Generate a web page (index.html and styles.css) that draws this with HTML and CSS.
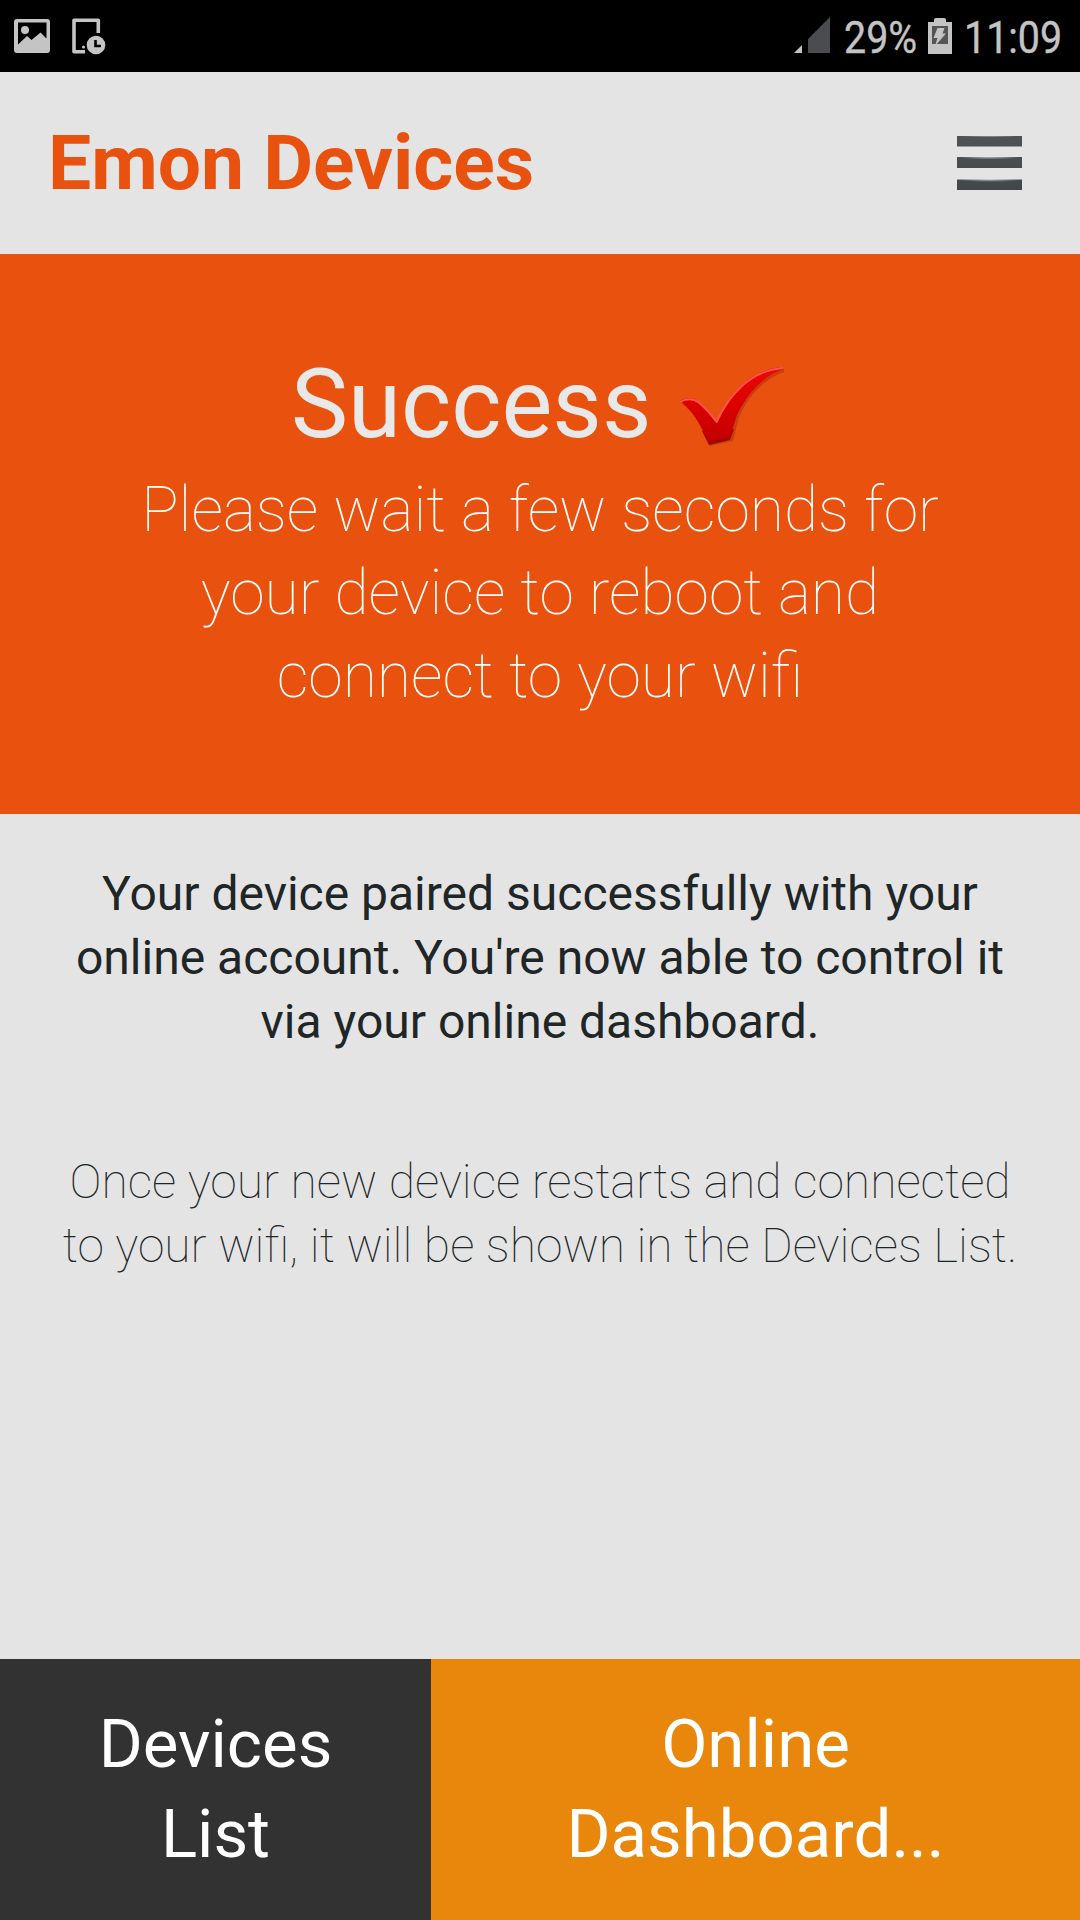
FILE: index.html
```
<!DOCTYPE html>
<html lang="en">
<head>
<meta charset="utf-8">
<title>Emon Devices</title>
<link rel="stylesheet" href="styles.css">
</head>
<body>
<div class="status-bar">
  <svg class="status-left" width="96" height="40" viewBox="12 16 96 40">
    <path fill="#c4c4c4" fill-rule="evenodd" d="M17 19h30q3 0 3 3v28q0 3-3 3H17q-3 0-3-3V22q0-3 3-3zm1 3.500v22l9-8.500 4.500 4 9-7.500 6 6V22.500z"/>
    <circle cx="25" cy="30" r="4" fill="#c4c4c4"/>
    <path fill="none" stroke="#c4c4c4" stroke-width="3.600" stroke-linejoin="round" d="M98.300 33V20.300H74V51.800H85"/>
    <circle cx="83.500" cy="47" r="1.500" fill="#c4c4c4"/>
    <circle cx="96" cy="45" r="9.300" fill="#c4c4c4"/>
    <path fill="none" stroke="#000" stroke-width="2.600" d="M95.500 40v6h5.500"/>
  </svg>
  <div class="status-right">
    <svg width="36" height="38" viewBox="794 16 36 38">
      <path fill="#c4c4c4" d="M794 53l8-8v8z"/>
      <path fill="#4b4c4f" d="M808 53V39l22-22v36z"/>
    </svg>
    <span class="percent"><span class="narrow">29%</span></span>
    <svg width="24" height="38" viewBox="928 16 24 38">
      <path fill="#c4c4c4" d="M928 22h6v-2q0-2 2-2h8q2 0 2 2v2h6v32h-24z"/>
      <path fill="#555" d="M932 26h16v18h-16z"/>
      <path fill="#c4c4c4" d="M937.500 28h7l-2 5.500h3.500L935 46l2.500-8h-4z"/>
    </svg>
    <span class="clock"><span class="narrow">11:09</span></span>
  </div>
</div>
<header class="header">
  <h1 class="title">Emon Devices</h1>
  <svg class="menu" width="65" height="54" viewBox="0 0 65 54">
    <defs>
      <linearGradient id="bar" x1="0" y1="0" x2="0" y2="1">
        <stop offset="0" stop-color="#505355"/><stop offset="1" stop-color="#444749"/>
      </linearGradient>
      <radialGradient id="shine" cx=".5" cy="0" r=".5">
        <stop offset="0" stop-color="#e4e4e4" stop-opacity=".8"/><stop offset="1" stop-color="#e4e4e4" stop-opacity="0"/>
      </radialGradient>
    </defs>
    <path fill="url(#bar)" d="M0 0h65v10.500H0zM0 21h65v11H0zM0 43.500h65V54H0z"/>
    <rect fill="url(#shine)" x="0" y="-1" width="65" height="5"/>
    <rect fill="url(#shine)" x="0" y="20.500" width="65" height="6"/>
    <rect fill="url(#shine)" x="0" y="43" width="65" height="6"/>
  </svg>
</header>
<section class="hero">
  <h2 class="result">Success
    <svg class="check" width="112" height="80" viewBox="676 362 112 80">
      <defs>
        <linearGradient id="red" x1="0" y1="0" x2="0" y2="1">
          <stop offset="0" stop-color="#ee0805"/><stop offset=".5" stop-color="#dc0000"/><stop offset="1" stop-color="#c20000"/>
        </linearGradient>
      </defs>
      <path fill="#8c1a08" opacity=".35" d="M683 405Q694 400 701 406Q712 415 718 424C732 396 752 373 785 370V373C763 381 749 398 740 418L734 442L711 447L705 435C699 421 692 411 683 405z"/>
      <path fill="#9c0a04" d="M703 432L710 446L731 441L735 430z"/>
      <path fill="url(#red)" d="M681 402C686 399 694 398 699 402Q710 411 717.500 422C730 395 751 371 783 368L784 370C762 378 747 397 738 416L731 438L709 443L704 432C698 419 690 409 681 402z"/>
      <path fill="none" stroke="#ff5550" stroke-width="2" stroke-linecap="round" stroke-linejoin="round" d="M682 402.500C687 399.500 694 399 699 403Q710 412 717.500 423C730 396 751 372 783 369"/>
    </svg>
  </h2>
  <p class="wait">Please wait a few seconds for<br>your device to reboot and<br>connect to your wifi</p>
</section>
<main class="content">
  <p class="paired">Your device paired successfully with your<br>online account. You're now able to control it<br>via your online dashboard.</p>
  <p class="note">Once your new device restarts and connected<br>to your wifi, it will be shown in the Devices List.</p>
</main>
<nav class="actions">
  <a class="action devices">Devices<br>List</a>
  <a class="action dashboard">Online<br>Dashboard...</a>
</nav>
</body>
</html>
```
FILE: styles.css
```
* { box-sizing: border-box; }
body {
  margin: 0;
  height: 1920px;
  display: flex;
  flex-direction: column;
  background: #e4e4e4;
  color: #202526;
  font-family: Roboto, sans-serif;
}
h1, h2, p { margin: 0; }
svg { display: block; flex: none; }
.status-bar {
  height: 72px;
  padding: 0 17px 0 12px;
  display: flex;
  justify-content: space-between;
  background: #000;
  color: #c4c4c4;
  font-size: 44.5px;
  line-height: 76px;
}
.status-bar svg { margin-top: 16px; }
.status-right { display: flex; }
.percent { width: 73px; margin: 0 11px 0 14px; }
.clock { width: 99px; margin-left: 12px; }
.narrow {
  display: inline-block;
  transform: scaleX(.885);
  transform-origin: left;
  white-space: nowrap;
  -webkit-text-stroke: .4px #c4c4c4;
}
.header {
  height: 182px;
  padding: 41px 58px 0 48px;
  display: flex;
  justify-content: space-between;
}
.title {
  color: #e9520e;
  font-size: 76.8px;
  font-weight: 700;
  line-height: 100px;
}
.menu { margin-top: 23px; }
.hero {
  height: 560px;
  padding-top: 94px;
  background: #e9520e;
  text-align: center;
}
.result {
  display: flex;
  justify-content: center;
  gap: 23.500px;
  padding-right: 2px;
  color: #e8e8e8;
  font-size: 96px;
  font-weight: 400;
  line-height: 112px;
}
.check { margin-top: 13px; overflow: visible; }
.wait {
  margin-top: 8px;
  color: #fff;
  font-size: 62.4px;
  font-weight: 100;
  line-height: 83.2px;
}
.content {
  flex: 1;
  padding-top: 47.600px;
  text-align: center;
  font-size: 48px;
  line-height: 64px;
}
.note {
  margin-top: 96px;
  font-weight: 100;
}
.actions {
  display: grid;
  grid-template-columns: 431px 1fr;
  height: 261px;
}
.action {
  padding-top: 40px;
  color: #fff;
  font-size: 67.2px;
  line-height: 90px;
  text-align: center;
}
.devices { background: #323232; }
.dashboard { background: #e8870c; }
```
